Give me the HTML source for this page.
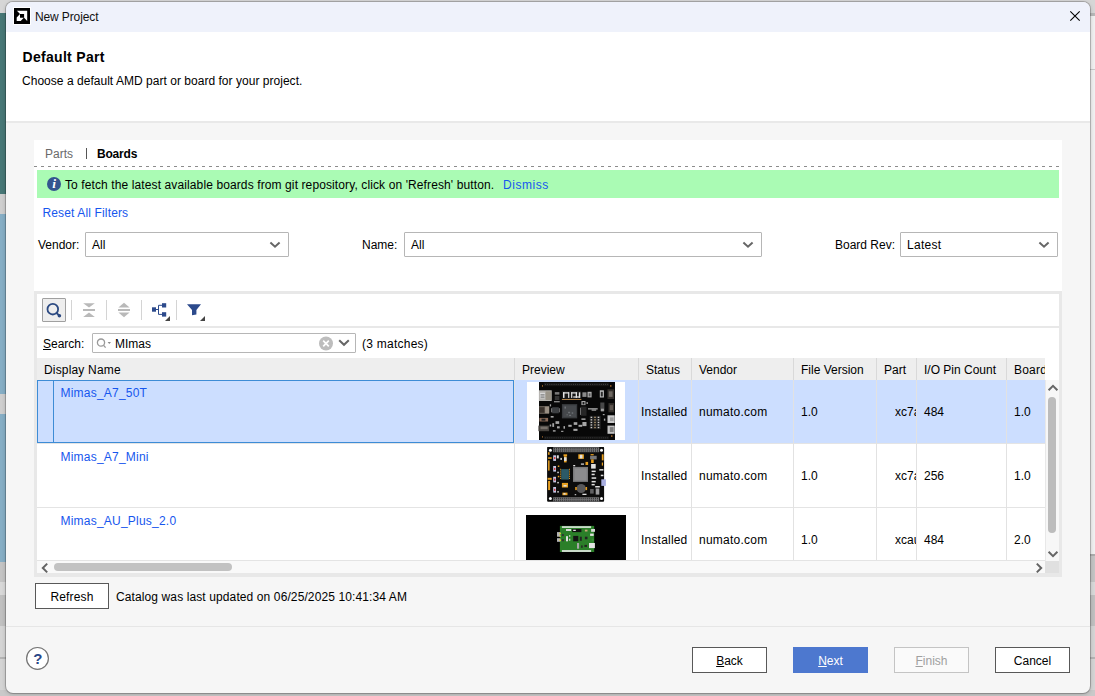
<!DOCTYPE html>
<html>
<head>
<meta charset="utf-8">
<title>New Project</title>
<style>
html,body{margin:0;padding:0;}
body{width:1095px;height:696px;overflow:hidden;position:relative;background:#d0d0d0;font-family:"Liberation Sans",sans-serif;font-size:12px;color:#000;}
.a{position:absolute;}
.t{position:absolute;white-space:nowrap;line-height:14px;font-size:12px;}
#dlg{left:6px;top:2px;width:1084px;height:691px;background:#f6f6f6;border-radius:7px;overflow:hidden;box-shadow:0 0 0 1px rgba(0,0,0,0.20),0 1px 4px 0 rgba(0,0,0,0.22);}
.combo{position:absolute;box-sizing:border-box;height:25px;border:1px solid #b6b6b6;border-radius:1px;background:#fff;top:232px;}
.combo svg{position:absolute;right:7px;top:8px;}
.btn{position:absolute;box-sizing:border-box;width:75px;height:26px;top:647px;border:1px solid #585858;background:#fff;text-align:center;line-height:26px;font-size:12px;}
.vsep{position:absolute;width:1px;top:300px;height:20px;background:#d4d4d4;}
.hd{position:absolute;top:358px;height:22px;background:#eeeeee;}
.cl{position:absolute;width:1px;background:#e2e2e2;top:358px;height:202px;}
.blue{color:#1656ee;}
u{text-decoration:underline;text-underline-offset:1px;}
</style>
</head>
<body>
<!-- background behind dialog -->
<div class="a" style="left:0;top:0;width:1095px;height:13px;background:#d6d6d6;"></div>
<div class="a" style="left:0;top:13px;width:8px;height:181px;background:#477776;"></div>
<div class="a" style="left:0;top:194px;width:8px;height:20px;background:#cecece;"></div>
<div class="a" style="left:0;top:214px;width:8px;height:180px;background:#86aec5;"></div>
<div class="a" style="left:0;top:394px;width:8px;height:20px;background:#cecece;"></div>
<div class="a" style="left:0;top:414px;width:8px;height:148px;background:#86aec5;"></div>
<div class="a" style="left:0;top:562px;width:8px;height:20px;background:#c4c4c4;"></div>
<div class="a" style="left:0;top:582px;width:8px;height:14px;background:#d8d8d8;"></div>
<div class="a" style="left:0;top:595px;width:8px;height:31px;background:#c0c0c0;"></div>
<div class="a" style="left:0;top:626px;width:8px;height:70px;background:#d4d4d4;"></div>
<div class="a" style="left:1088px;top:13px;width:7px;height:3px;background:#b8b8b8;"></div>
<div class="a" style="left:1088px;top:16px;width:7px;height:538px;background:#f0f0f0;"></div>
<div class="a" style="left:1088px;top:69px;width:7px;height:1px;background:#c8c8c8;"></div>
<div class="a" style="left:1088px;top:554px;width:7px;height:28px;background:#c4c4c4;"></div>
<div class="a" style="left:1088px;top:554px;width:7px;height:2px;background:#acacac;"></div>
<div class="a" style="left:1088px;top:582px;width:7px;height:14px;background:#d8d8d8;"></div>
<div class="a" style="left:1088px;top:595px;width:7px;height:31px;background:#c0c0c0;"></div>
<div class="a" style="left:1088px;top:626px;width:7px;height:70px;background:#d4d4d4;"></div>
<div class="a" style="left:1088px;top:657px;width:7px;height:2px;background:#b4b4b4;"></div>
<div class="a" style="left:0;top:657px;width:8px;height:2px;background:#b4b4b4;"></div>
<div class="a" style="left:0;top:690px;width:1095px;height:6px;background:#c9c9c9;"></div>

<div id="dlg" class="a">
  <div class="a" style="left:0;top:0;width:1085px;height:30px;background:#eff2fb;"></div>
  <div class="a" style="left:0;top:30px;width:1085px;height:89px;background:#fff;"></div>
  <div class="a" style="left:0;top:119px;width:1085px;height:2px;background:#e9e9e9;"></div>
  <div class="a" style="left:0;top:624px;width:1085px;height:1px;background:#e6e6e6;"></div>
</div>

<!-- title bar -->
<svg class="a" style="left:13px;top:7px" width="18" height="18" viewBox="0 0 18 18">
  <rect x="0" y="0" width="18" height="18" fill="#fff"/>
  <rect x="1" y="1" width="16" height="16" fill="#000"/>
  <polygon points="3.9,3.7 14.2,3.7 14.2,14.1 11.1,10.8 11.1,7 7,7" fill="#fff"/>
  <polygon points="7,7 7,10.8 10.8,10.8 7.7,14.1 3.7,14.1 3.7,10.4" fill="#fff"/>
</svg>
<div class="t" style="left:35px;top:10px;font-size:12px;letter-spacing:-0.12px;color:#111;">New Project</div>
<svg class="a" style="left:1068px;top:9px" width="14" height="14" viewBox="0 0 14 14"><path d="M2.3 2.3 L11.7 11.7 M11.7 2.3 L2.3 11.7" stroke="#000" stroke-width="1.1" fill="none"/></svg>

<!-- header -->
<div class="t" style="left:22.5px;top:48px;font-size:14px;font-weight:bold;line-height:18px;letter-spacing:0.3px;">Default Part</div>
<div class="t" style="left:22px;top:74px;letter-spacing:0.03px;">Choose a default AMD part or board for your project.</div>

<!-- upper white panel -->
<div class="a" style="left:34px;top:140px;width:1028px;height:151px;background:#fff;"></div>
<div class="t" style="left:45px;top:147px;color:#6a6a6a;">Parts</div>
<div class="a" style="left:86px;top:148px;width:1px;height:11px;background:#555;"></div>
<div class="t" style="left:97px;top:147px;font-weight:bold;letter-spacing:-0.2px;">Boards</div>
<div class="a" style="left:34px;top:166px;width:1028px;height:1px;background:repeating-linear-gradient(90deg,#8c8c8c 0,#8c8c8c 3px,transparent 3px,transparent 7px);"></div>
<div class="a" style="left:37px;top:170px;width:1022px;height:28px;background:#aafbb4;"></div>
<svg class="a" style="left:46px;top:176px" width="16" height="16" viewBox="0 0 16 16">
  <circle cx="8" cy="8" r="7" fill="#34558f"/>
  <text x="8.2" y="12.4" font-family="Liberation Serif, serif" font-size="13.5" font-weight="bold" font-style="italic" fill="#fff" text-anchor="middle">i</text>
</svg>
<div class="t" style="left:65px;top:178px;letter-spacing:0.11px;">To fetch the latest available boards from git repository, click on 'Refresh' button.</div>
<div class="t blue" style="left:503px;top:178px;letter-spacing:0.55px;">Dismiss</div>
<div class="t blue" style="left:42.5px;top:206px;letter-spacing:0.14px;">Reset All Filters</div>

<div class="t" style="left:38px;top:238px;">Vendor:</div>
<div class="combo" style="left:85px;width:204px;"><span class="t" style="left:6px;top:5px;">All</span><svg width="12" height="8" viewBox="0 0 12 8"><path d="M1.4 1.6 L6 5.7 L10.6 1.6" stroke="#666" stroke-width="2" fill="none"/></svg></div>
<div class="t" style="left:362px;top:238px;">Name:</div>
<div class="combo" style="left:404px;width:358px;"><span class="t" style="left:6px;top:5px;">All</span><svg width="12" height="8" viewBox="0 0 12 8"><path d="M1.4 1.6 L6 5.7 L10.6 1.6" stroke="#666" stroke-width="2" fill="none"/></svg></div>
<div class="t" style="left:835px;top:238px;">Board Rev:</div>
<div class="combo" style="left:900px;width:158px;"><span class="t" style="left:6px;top:5px;letter-spacing:0.3px;">Latest</span><svg width="12" height="8" viewBox="0 0 12 8"><path d="M1.4 1.6 L6 5.7 L10.6 1.6" stroke="#666" stroke-width="2" fill="none"/></svg></div>

<!-- lower panel -->
<div class="a" style="left:34px;top:291px;width:1028px;height:286px;background:#e8e8e8;"></div>
<div class="a" style="left:37px;top:294px;width:1022px;height:279px;background:#fff;"></div>
<div class="a" style="left:37px;top:326px;width:1022px;height:2px;background:#e8e8e8;"></div>

<!-- toolbar -->
<div class="a" style="left:42px;top:298px;width:24px;height:24px;box-sizing:border-box;border:1px solid #a0a0a0;background:#eeeeee;border-radius:1px;"></div>
<svg class="a" style="left:44px;top:300px" width="20" height="20" viewBox="0 0 20 20">
  <circle cx="8.8" cy="9.2" r="5.3" fill="none" stroke="#2c4a82" stroke-width="1.8"/>
  <path d="M12.6 13 L15 15.4" stroke="#2c4a82" stroke-width="1.8"/><circle cx="15.4" cy="15.7" r="1.8" fill="#2c4a82"/>
</svg>
<div class="vsep" style="left:71px;"></div>
<svg class="a" style="left:80px;top:300px" width="20" height="20" viewBox="0 0 20 20" fill="#b9b9b9">
  <polygon points="3.2,3.2 14.8,3.2 9,7.4"/><rect x="3" y="9" width="12" height="2"/><polygon points="3.2,17 14.8,17 9,12.6"/>
</svg>
<div class="vsep" style="left:106px;"></div>
<svg class="a" style="left:115px;top:300px" width="20" height="20" viewBox="0 0 20 20" fill="#b9b9b9">
  <polygon points="3.4,7.4 14.6,7.4 9,2.8"/><rect x="3" y="9" width="12" height="2"/><polygon points="3.4,12.6 14.6,12.6 9,17.2"/>
</svg>
<div class="vsep" style="left:141px;"></div>
<svg class="a" style="left:150px;top:300px" width="22" height="22" viewBox="0 0 22 22">
  <g fill="#2c4a8c"><rect x="2" y="7.3" width="4" height="4.4"/><rect x="12" y="3.2" width="4.2" height="4.3"/><rect x="12" y="12.2" width="4.2" height="4.4"/></g>
  <path d="M6 9.5 H8.5 M8.5 5.3 V14.4 M8.5 5.3 H12 M8.5 14.4 H12" stroke="#2c4a8c" stroke-width="1" fill="none"/>
  <polygon points="20,16 20,21 15,21" fill="#444"/>
</svg>
<div class="vsep" style="left:176px;"></div>
<svg class="a" style="left:185px;top:300px" width="22" height="22" viewBox="0 0 22 22">
  <polygon points="2,4.2 16,4.2 11.4,10 11.4,14.4 7,15.3 7,10" fill="#2c4a8c"/>
  <polygon points="20,16 20,21 15,21" fill="#444"/>
</svg>

<!-- search row -->
<div class="t" style="left:43px;top:337px;"><u>S</u>earch:</div>
<div class="a" style="left:92px;top:333px;width:264px;height:20px;box-sizing:border-box;border:1px solid #b6b6b6;border-radius:1px;background:#fff;"></div>
<svg class="a" style="left:95px;top:336px" width="18" height="14" viewBox="0 0 18 14">
  <circle cx="6" cy="6.6" r="3.6" fill="none" stroke="#9a9a9a" stroke-width="1.3"/>
  <path d="M8.6 9.4 L10.6 11.6" stroke="#9a9a9a" stroke-width="1.4"/>
  <polygon points="12.6,6 16,6 14.3,7.9" fill="#8a8a8a"/>
</svg>
<div class="t" style="left:115px;top:337px;">MImas</div>
<svg class="a" style="left:318px;top:335px" width="16" height="16" viewBox="0 0 16 16">
  <circle cx="8" cy="8.5" r="7" fill="#bdbdbd"/>
  <path d="M5.2 5.7 L10.8 11.3 M10.8 5.7 L5.2 11.3" stroke="#fff" stroke-width="1.7"/>
</svg>
<svg class="a" style="left:338px;top:339px" width="12" height="8" viewBox="0 0 12 8"><path d="M1.2 1.2 L6 5.8 L10.8 1.2" stroke="#666" stroke-width="2" fill="none"/></svg>
<div class="t" style="left:362px;top:337px;letter-spacing:0.25px;">(3 matches)</div>

<!-- table header -->
<div class="hd" style="left:37px;width:1008px;"></div>
<div class="t" style="left:44px;top:363px;letter-spacing:0.17px;">Display Name</div>
<div class="t" style="left:522px;top:363px;">Preview</div>
<div class="t" style="left:646px;top:363px;">Status</div>
<div class="t" style="left:699px;top:363px;">Vendor</div>
<div class="t" style="left:801px;top:363px;">File Version</div>
<div class="t" style="left:884px;top:363px;">Part</div>
<div class="t" style="left:924px;top:363px;">I/O Pin Count</div>
<div class="t" style="left:1014px;top:363px;width:31px;overflow:hidden;letter-spacing:0.2px;">Board</div>

<!-- rows -->
<div class="a" style="left:37px;top:380px;width:1008px;height:63px;background:#ccdeff;"></div>
<div class="a" style="left:37px;top:443px;width:1008px;height:1px;background:#e4e4e4;"></div>
<div class="a" style="left:37px;top:507px;width:1008px;height:1px;background:#e4e4e4;"></div>
<div class="a" style="left:37px;top:560px;width:1022px;height:13px;background:#f9f9f9;"></div>
<div class="a" style="left:37px;top:560px;width:1008px;height:1px;background:#e4e4e4;"></div>
<div class="cl" style="left:514px;"></div>
<div class="cl" style="left:638px;"></div>
<div class="cl" style="left:691px;"></div>
<div class="cl" style="left:793px;"></div>
<div class="cl" style="left:876px;"></div>
<div class="cl" style="left:916px;"></div>
<div class="cl" style="left:1006px;"></div>
<div class="a" style="left:514px;top:358px;width:1px;height:22px;background:#d9d9d9;"></div>
<div class="a" style="left:638px;top:358px;width:1px;height:22px;background:#d9d9d9;"></div>
<div class="a" style="left:691px;top:358px;width:1px;height:22px;background:#d9d9d9;"></div>
<div class="a" style="left:793px;top:358px;width:1px;height:22px;background:#d9d9d9;"></div>
<div class="a" style="left:876px;top:358px;width:1px;height:22px;background:#d9d9d9;"></div>
<div class="a" style="left:916px;top:358px;width:1px;height:22px;background:#d9d9d9;"></div>
<div class="a" style="left:1006px;top:358px;width:1px;height:22px;background:#d9d9d9;"></div>
<div class="a" style="left:37px;top:380px;width:477px;height:63px;box-sizing:border-box;border:1px solid #3d8cd6;"></div>
<div class="a" style="left:53px;top:380px;width:1px;height:63px;background:#3d8cd6;"></div>

<div class="t blue" style="letter-spacing:0.22px;left:60.5px;top:386px;">Mimas_A7_50T</div>
<div class="t blue" style="letter-spacing:0.22px;left:60.5px;top:450px;">Mimas_A7_Mini</div>
<div class="t blue" style="letter-spacing:0.22px;left:60.5px;top:514px;">Mimas_AU_Plus_2.0</div>

<div id="imgs">
<svg class="a" style="left:527px;top:382px" width="98" height="58" viewBox="0 0 98 58">
<rect x="0.0" y="0.0" width="98.0" height="58.0" fill="#fff"/>
<rect x="12.0" y="0.0" width="76.0" height="58.0" fill="#080808"/>
<rect x="17.0" y="0.6" width="64.9" height="3.6" fill="#161616"/>
<rect x="17.0" y="54.3" width="64.9" height="3.1" fill="#161616"/>
<rect x="18.1" y="1.9" width="0.8" height="1.0" fill="#4a4a4a"/>
<rect x="18.1" y="55.3" width="0.8" height="1.0" fill="#3a3a3a"/>
<rect x="20.2" y="1.9" width="0.8" height="1.0" fill="#4a4a4a"/>
<rect x="20.2" y="55.3" width="0.8" height="1.0" fill="#3a3a3a"/>
<rect x="22.4" y="1.9" width="0.8" height="1.0" fill="#4a4a4a"/>
<rect x="22.4" y="55.3" width="0.8" height="1.0" fill="#3a3a3a"/>
<rect x="24.5" y="1.9" width="0.8" height="1.0" fill="#4a4a4a"/>
<rect x="24.5" y="55.3" width="0.8" height="1.0" fill="#3a3a3a"/>
<rect x="26.7" y="1.9" width="0.8" height="1.0" fill="#4a4a4a"/>
<rect x="26.7" y="55.3" width="0.8" height="1.0" fill="#3a3a3a"/>
<rect x="28.8" y="1.9" width="0.8" height="1.0" fill="#4a4a4a"/>
<rect x="28.8" y="55.3" width="0.8" height="1.0" fill="#3a3a3a"/>
<rect x="30.9" y="1.9" width="0.8" height="1.0" fill="#4a4a4a"/>
<rect x="30.9" y="55.3" width="0.8" height="1.0" fill="#3a3a3a"/>
<rect x="33.1" y="1.9" width="0.8" height="1.0" fill="#4a4a4a"/>
<rect x="33.1" y="55.3" width="0.8" height="1.0" fill="#3a3a3a"/>
<rect x="35.2" y="1.9" width="0.8" height="1.0" fill="#4a4a4a"/>
<rect x="35.2" y="55.3" width="0.8" height="1.0" fill="#3a3a3a"/>
<rect x="37.4" y="1.9" width="0.8" height="1.0" fill="#4a4a4a"/>
<rect x="37.4" y="55.3" width="0.8" height="1.0" fill="#3a3a3a"/>
<rect x="39.5" y="1.9" width="0.8" height="1.0" fill="#4a4a4a"/>
<rect x="39.5" y="55.3" width="0.8" height="1.0" fill="#3a3a3a"/>
<rect x="41.7" y="1.9" width="0.8" height="1.0" fill="#4a4a4a"/>
<rect x="41.7" y="55.3" width="0.8" height="1.0" fill="#3a3a3a"/>
<rect x="43.8" y="1.9" width="0.8" height="1.0" fill="#4a4a4a"/>
<rect x="43.8" y="55.3" width="0.8" height="1.0" fill="#3a3a3a"/>
<rect x="46.0" y="1.9" width="0.8" height="1.0" fill="#4a4a4a"/>
<rect x="46.0" y="55.3" width="0.8" height="1.0" fill="#3a3a3a"/>
<rect x="48.1" y="1.9" width="0.8" height="1.0" fill="#4a4a4a"/>
<rect x="48.1" y="55.3" width="0.8" height="1.0" fill="#3a3a3a"/>
<rect x="50.3" y="1.9" width="0.8" height="1.0" fill="#4a4a4a"/>
<rect x="50.3" y="55.3" width="0.8" height="1.0" fill="#3a3a3a"/>
<rect x="52.4" y="1.9" width="0.8" height="1.0" fill="#4a4a4a"/>
<rect x="52.4" y="55.3" width="0.8" height="1.0" fill="#3a3a3a"/>
<rect x="54.6" y="1.9" width="0.8" height="1.0" fill="#4a4a4a"/>
<rect x="54.6" y="55.3" width="0.8" height="1.0" fill="#3a3a3a"/>
<rect x="56.7" y="1.9" width="0.8" height="1.0" fill="#4a4a4a"/>
<rect x="56.7" y="55.3" width="0.8" height="1.0" fill="#3a3a3a"/>
<rect x="58.9" y="1.9" width="0.8" height="1.0" fill="#4a4a4a"/>
<rect x="58.9" y="55.3" width="0.8" height="1.0" fill="#3a3a3a"/>
<rect x="61.0" y="1.9" width="0.8" height="1.0" fill="#4a4a4a"/>
<rect x="61.0" y="55.3" width="0.8" height="1.0" fill="#3a3a3a"/>
<rect x="63.2" y="1.9" width="0.8" height="1.0" fill="#4a4a4a"/>
<rect x="63.2" y="55.3" width="0.8" height="1.0" fill="#3a3a3a"/>
<rect x="65.3" y="1.9" width="0.8" height="1.0" fill="#4a4a4a"/>
<rect x="65.3" y="55.3" width="0.8" height="1.0" fill="#3a3a3a"/>
<rect x="67.5" y="1.9" width="0.8" height="1.0" fill="#4a4a4a"/>
<rect x="67.5" y="55.3" width="0.8" height="1.0" fill="#3a3a3a"/>
<rect x="69.6" y="1.9" width="0.8" height="1.0" fill="#4a4a4a"/>
<rect x="69.6" y="55.3" width="0.8" height="1.0" fill="#3a3a3a"/>
<rect x="71.8" y="1.9" width="0.8" height="1.0" fill="#4a4a4a"/>
<rect x="71.8" y="55.3" width="0.8" height="1.0" fill="#3a3a3a"/>
<rect x="73.9" y="1.9" width="0.8" height="1.0" fill="#4a4a4a"/>
<rect x="73.9" y="55.3" width="0.8" height="1.0" fill="#3a3a3a"/>
<rect x="76.1" y="1.9" width="0.8" height="1.0" fill="#4a4a4a"/>
<rect x="76.1" y="55.3" width="0.8" height="1.0" fill="#3a3a3a"/>
<rect x="78.2" y="1.9" width="0.8" height="1.0" fill="#4a4a4a"/>
<rect x="78.2" y="55.3" width="0.8" height="1.0" fill="#3a3a3a"/>
<rect x="80.3" y="1.9" width="0.8" height="1.0" fill="#4a4a4a"/>
<rect x="80.3" y="55.3" width="0.8" height="1.0" fill="#3a3a3a"/>
<rect x="11.9" y="8.3" width="12.8" height="10.7" fill="#b4b2ae"/>
<rect x="12.9" y="10.8" width="5.1" height="5.6" fill="#d8d8d8"/>
<rect x="13.5" y="12.4" width="4.1" height="1.0" fill="#6a6a6a"/>
<rect x="13.5" y="14.6" width="4.1" height="1.0" fill="#6a6a6a"/>
<rect x="18.6" y="9.3" width="5.6" height="8.7" fill="#9a9488"/>
<rect x="12.2" y="24.1" width="9.9" height="7.7" fill="#6e655c"/>
<rect x="12.2" y="25.2" width="5.3" height="5.6" fill="#3a322c"/>
<rect x="18.1" y="24.6" width="4.1" height="6.6" fill="#9a9084"/>
<rect x="12.4" y="35.9" width="8.7" height="3.6" fill="#8a6a58"/>
<rect x="14.5" y="36.7" width="3.9" height="2.0" fill="#222"/>
<rect x="11.4" y="43.6" width="10.7" height="5.6" fill="#46423e"/>
<rect x="13.5" y="44.6" width="7.2" height="2.6" fill="#77706a"/>
<rect x="34.9" y="8.8" width="19.4" height="9.2" fill="#181818"/>
<rect x="36.0" y="10.3" width="1.5" height="5.6" fill="#e4e4e4"/>
<rect x="36.0" y="10.3" width="6.1" height="1.2" fill="#e4e4e4"/>
<rect x="41.1" y="10.3" width="1.2" height="5.6" fill="#e4e4e4"/>
<rect x="44.1" y="10.3" width="1.2" height="5.6" fill="#e4e4e4"/>
<rect x="44.1" y="10.3" width="6.1" height="1.2" fill="#e4e4e4"/>
<rect x="48.7" y="10.3" width="1.3" height="5.6" fill="#e4e4e4"/>
<rect x="51.8" y="10.3" width="1.5" height="5.6" fill="#e4e4e4"/>
<rect x="46.2" y="14.4" width="6.1" height="1.2" fill="#e4e4e4"/>
<rect x="34.9" y="17.0" width="19.4" height="1.0" fill="#b08248"/>
<rect x="55.4" y="10.3" width="4.1" height="4.6" fill="#8a8a8a"/>
<rect x="60.5" y="9.8" width="4.1" height="5.6" fill="#b0b0b0"/>
<rect x="61.7" y="11.3" width="1.8" height="3.1" fill="#555"/>
<rect x="27.8" y="10.1" width="4.6" height="2.5" fill="#7a7a7a"/>
<rect x="27.8" y="13.9" width="4.6" height="4.1" fill="#343434"/>
<rect x="34.9" y="22.1" width="15.3" height="14.3" fill="#383b3e"/>
<rect x="36.2" y="23.4" width="12.9" height="11.7" fill="#45484b"/>
<rect x="37.5" y="24.6" width="1.5" height="2.0" fill="#6c7074"/>
<rect x="41.1" y="29.8" width="2.0" height="1.5" fill="#6c7074"/>
<rect x="44.7" y="30.3" width="1.5" height="1.5" fill="#6c7074"/>
<rect x="42.1" y="32.8" width="2.0" height="1.2" fill="#6c7074"/>
<rect x="39.5" y="32.3" width="1.3" height="1.0" fill="#6c7074"/>
<rect x="25.2" y="25.2" width="6.6" height="6.1" fill="#3c3f42"/>
<rect x="24.2" y="26.2" width="1.0" height="4.1" fill="#8a8a8a"/>
<rect x="31.9" y="26.2" width="0.8" height="4.1" fill="#8a8a8a"/>
<rect x="53.9" y="24.6" width="5.6" height="9.2" fill="#262626"/>
<rect x="53.1" y="25.7" width="0.8" height="7.2" fill="#8a8a8a"/>
<rect x="54.4" y="19.0" width="4.1" height="4.1" fill="#a4a4a4"/>
<rect x="55.6" y="20.0" width="1.8" height="2.4" fill="#1c1c1c"/>
<rect x="80.5" y="7.3" width="6.6" height="9.7" fill="#34302c"/>
<rect x="81.8" y="9.3" width="3.8" height="5.6" fill="#6e6862"/>
<rect x="81.5" y="21.1" width="5.6" height="9.2" fill="#34302c"/>
<rect x="82.8" y="23.1" width="3.3" height="5.1" fill="#5e5650"/>
<rect x="80.5" y="33.3" width="7.2" height="7.7" fill="#cacaca"/>
<rect x="83.0" y="35.4" width="3.6" height="3.6" fill="#9c9c9c"/>
<rect x="80.5" y="43.6" width="7.2" height="8.2" fill="#c2c2c2"/>
<rect x="82.8" y="45.1" width="3.8" height="4.9" fill="#7c7c7c"/>
<rect x="72.8" y="8.3" width="4.1" height="7.2" fill="#bcbcbc"/>
<rect x="73.8" y="9.8" width="2.0" height="4.6" fill="#2c2c2c"/>
<rect x="73.3" y="20.5" width="4.1" height="8.7" fill="#484848"/>
<rect x="74.0" y="26.7" width="2.9" height="2.6" fill="#a0a0a0"/>
<rect x="62.6" y="33.8" width="11.3" height="13.3" fill="#202020"/>
<rect x="63.6" y="34.7" width="1.6" height="1.3" fill="#c8c8c8"/>
<rect x="67.2" y="34.7" width="1.6" height="1.3" fill="#a89068"/>
<rect x="70.7" y="34.7" width="1.6" height="1.3" fill="#c8c8c8"/>
<rect x="63.6" y="37.2" width="1.6" height="1.3" fill="#c8c8c8"/>
<rect x="67.2" y="37.2" width="1.6" height="1.3" fill="#a89068"/>
<rect x="70.7" y="37.2" width="1.6" height="1.3" fill="#c8c8c8"/>
<rect x="63.6" y="39.8" width="1.6" height="1.3" fill="#c8c8c8"/>
<rect x="67.2" y="39.8" width="1.6" height="1.3" fill="#a89068"/>
<rect x="70.7" y="39.8" width="1.6" height="1.3" fill="#c8c8c8"/>
<rect x="63.6" y="42.3" width="1.6" height="1.3" fill="#c8c8c8"/>
<rect x="67.2" y="42.3" width="1.6" height="1.3" fill="#a89068"/>
<rect x="70.7" y="42.3" width="1.6" height="1.3" fill="#c8c8c8"/>
<rect x="63.6" y="44.9" width="1.6" height="1.3" fill="#c8c8c8"/>
<rect x="67.2" y="44.9" width="1.6" height="1.3" fill="#a89068"/>
<rect x="70.7" y="44.9" width="1.6" height="1.3" fill="#c8c8c8"/>
<rect x="61.0" y="26.2" width="9.7" height="1.3" fill="#a6a6a6"/>
<rect x="64.6" y="27.5" width="4.6" height="1.2" fill="#a6a6a6"/>
<rect x="46.7" y="40.2" width="3.6" height="2.7" fill="#a6a6a6"/>
<rect x="41.3" y="42.8" width="3.4" height="2.0" fill="#a6a6a6"/>
<rect x="51.5" y="42.8" width="3.7" height="2.0" fill="#a6a6a6"/>
<rect x="46.4" y="46.8" width="4.1" height="2.1" fill="#a6a6a6"/>
<rect x="23.7" y="34.0" width="2.9" height="1.6" fill="#a6a6a6"/>
<rect x="28.5" y="39.2" width="3.7" height="2.7" fill="#a6a6a6"/>
<rect x="25.3" y="41.2" width="1.8" height="3.7" fill="#a6a6a6"/>
<rect x="30.0" y="44.3" width="2.7" height="2.1" fill="#a6a6a6"/>
<rect x="25.9" y="48.2" width="2.7" height="1.4" fill="#a6a6a6"/>
<rect x="34.1" y="48.8" width="2.3" height="1.1" fill="#a6a6a6"/>
<rect x="76.9" y="36.6" width="1.4" height="2.1" fill="#a6a6a6"/>
<rect x="75.8" y="32.0" width="1.8" height="1.2" fill="#a6a6a6"/>
<rect x="59.5" y="20.2" width="1.4" height="1.7" fill="#a6a6a6"/>
<rect x="27.0" y="19.2" width="5.7" height="1.1" fill="#a6a6a6"/>
<rect x="22.8" y="22.3" width="1.3" height="2.1" fill="#a6a6a6"/>
<rect x="54.4" y="36.4" width="4.1" height="1.5" fill="#a6a6a6"/>
<rect x="55.4" y="40.0" width="4.1" height="4.1" fill="#a6a6a6"/>
<rect x="36.5" y="44.1" width="1.5" height="2.6" fill="#a6a6a6"/>
<rect x="22.7" y="42.5" width="1.5" height="2.0" fill="#a6a6a6"/>
<rect x="15.0" y="3.2" width="1.0" height="1.5" fill="#a86c2c"/>
<rect x="83.0" y="3.2" width="1.5" height="1.5" fill="#a86c2c"/>
<rect x="15.0" y="54.3" width="1.0" height="1.2" fill="#a86c2c"/>
<rect x="84.0" y="53.3" width="1.5" height="1.5" fill="#a86c2c"/>
</svg>
<svg class="a" style="left:547px;top:447px" width="60" height="55" viewBox="0 0 60 55">
<rect x="0.1" y="-0.1" width="57.0" height="54.9" fill="#0c0c0c" rx="1"/>
<rect x="6.2" y="0.3" width="46.0" height="4.9" fill="#747476"/>
<rect x="6.2" y="50.2" width="46.0" height="4.4" fill="#747476"/>
<rect x="7.1" y="0.9" width="0.9" height="1.6" fill="#303030"/>
<rect x="7.1" y="3.2" width="0.9" height="1.6" fill="#303030"/>
<rect x="7.1" y="50.7" width="0.9" height="1.4" fill="#303030"/>
<rect x="7.1" y="52.8" width="0.9" height="1.4" fill="#303030"/>
<rect x="9.1" y="0.9" width="0.9" height="1.6" fill="#303030"/>
<rect x="9.1" y="3.2" width="0.9" height="1.6" fill="#303030"/>
<rect x="9.1" y="50.7" width="0.9" height="1.4" fill="#303030"/>
<rect x="9.1" y="52.8" width="0.9" height="1.4" fill="#303030"/>
<rect x="11.2" y="0.9" width="0.9" height="1.6" fill="#303030"/>
<rect x="11.2" y="3.2" width="0.9" height="1.6" fill="#303030"/>
<rect x="11.2" y="50.7" width="0.9" height="1.4" fill="#303030"/>
<rect x="11.2" y="52.8" width="0.9" height="1.4" fill="#303030"/>
<rect x="13.2" y="0.9" width="0.9" height="1.6" fill="#303030"/>
<rect x="13.2" y="3.2" width="0.9" height="1.6" fill="#303030"/>
<rect x="13.2" y="50.7" width="0.9" height="1.4" fill="#303030"/>
<rect x="13.2" y="52.8" width="0.9" height="1.4" fill="#303030"/>
<rect x="15.2" y="0.9" width="0.9" height="1.6" fill="#303030"/>
<rect x="15.2" y="3.2" width="0.9" height="1.6" fill="#303030"/>
<rect x="15.2" y="50.7" width="0.9" height="1.4" fill="#303030"/>
<rect x="15.2" y="52.8" width="0.9" height="1.4" fill="#303030"/>
<rect x="17.3" y="0.9" width="0.9" height="1.6" fill="#303030"/>
<rect x="17.3" y="3.2" width="0.9" height="1.6" fill="#303030"/>
<rect x="17.3" y="50.7" width="0.9" height="1.4" fill="#303030"/>
<rect x="17.3" y="52.8" width="0.9" height="1.4" fill="#303030"/>
<rect x="19.3" y="0.9" width="0.9" height="1.6" fill="#303030"/>
<rect x="19.3" y="3.2" width="0.9" height="1.6" fill="#303030"/>
<rect x="19.3" y="50.7" width="0.9" height="1.4" fill="#303030"/>
<rect x="19.3" y="52.8" width="0.9" height="1.4" fill="#303030"/>
<rect x="21.4" y="0.9" width="0.9" height="1.6" fill="#303030"/>
<rect x="21.4" y="3.2" width="0.9" height="1.6" fill="#303030"/>
<rect x="21.4" y="50.7" width="0.9" height="1.4" fill="#303030"/>
<rect x="21.4" y="52.8" width="0.9" height="1.4" fill="#303030"/>
<rect x="23.4" y="0.9" width="0.9" height="1.6" fill="#303030"/>
<rect x="23.4" y="3.2" width="0.9" height="1.6" fill="#303030"/>
<rect x="23.4" y="50.7" width="0.9" height="1.4" fill="#303030"/>
<rect x="23.4" y="52.8" width="0.9" height="1.4" fill="#303030"/>
<rect x="25.5" y="0.9" width="0.9" height="1.6" fill="#303030"/>
<rect x="25.5" y="3.2" width="0.9" height="1.6" fill="#303030"/>
<rect x="25.5" y="50.7" width="0.9" height="1.4" fill="#303030"/>
<rect x="25.5" y="52.8" width="0.9" height="1.4" fill="#303030"/>
<rect x="27.5" y="0.9" width="0.9" height="1.6" fill="#303030"/>
<rect x="27.5" y="3.2" width="0.9" height="1.6" fill="#303030"/>
<rect x="27.5" y="50.7" width="0.9" height="1.4" fill="#303030"/>
<rect x="27.5" y="52.8" width="0.9" height="1.4" fill="#303030"/>
<rect x="29.6" y="0.9" width="0.9" height="1.6" fill="#303030"/>
<rect x="29.6" y="3.2" width="0.9" height="1.6" fill="#303030"/>
<rect x="29.6" y="50.7" width="0.9" height="1.4" fill="#303030"/>
<rect x="29.6" y="52.8" width="0.9" height="1.4" fill="#303030"/>
<rect x="31.6" y="0.9" width="0.9" height="1.6" fill="#303030"/>
<rect x="31.6" y="3.2" width="0.9" height="1.6" fill="#303030"/>
<rect x="31.6" y="50.7" width="0.9" height="1.4" fill="#303030"/>
<rect x="31.6" y="52.8" width="0.9" height="1.4" fill="#303030"/>
<rect x="33.7" y="0.9" width="0.9" height="1.6" fill="#303030"/>
<rect x="33.7" y="3.2" width="0.9" height="1.6" fill="#303030"/>
<rect x="33.7" y="50.7" width="0.9" height="1.4" fill="#303030"/>
<rect x="33.7" y="52.8" width="0.9" height="1.4" fill="#303030"/>
<rect x="35.7" y="0.9" width="0.9" height="1.6" fill="#303030"/>
<rect x="35.7" y="3.2" width="0.9" height="1.6" fill="#303030"/>
<rect x="35.7" y="50.7" width="0.9" height="1.4" fill="#303030"/>
<rect x="35.7" y="52.8" width="0.9" height="1.4" fill="#303030"/>
<rect x="37.7" y="0.9" width="0.9" height="1.6" fill="#303030"/>
<rect x="37.7" y="3.2" width="0.9" height="1.6" fill="#303030"/>
<rect x="37.7" y="50.7" width="0.9" height="1.4" fill="#303030"/>
<rect x="37.7" y="52.8" width="0.9" height="1.4" fill="#303030"/>
<rect x="39.8" y="0.9" width="0.9" height="1.6" fill="#303030"/>
<rect x="39.8" y="3.2" width="0.9" height="1.6" fill="#303030"/>
<rect x="39.8" y="50.7" width="0.9" height="1.4" fill="#303030"/>
<rect x="39.8" y="52.8" width="0.9" height="1.4" fill="#303030"/>
<rect x="41.8" y="0.9" width="0.9" height="1.6" fill="#303030"/>
<rect x="41.8" y="3.2" width="0.9" height="1.6" fill="#303030"/>
<rect x="41.8" y="50.7" width="0.9" height="1.4" fill="#303030"/>
<rect x="41.8" y="52.8" width="0.9" height="1.4" fill="#303030"/>
<rect x="43.9" y="0.9" width="0.9" height="1.6" fill="#303030"/>
<rect x="43.9" y="3.2" width="0.9" height="1.6" fill="#303030"/>
<rect x="43.9" y="50.7" width="0.9" height="1.4" fill="#303030"/>
<rect x="43.9" y="52.8" width="0.9" height="1.4" fill="#303030"/>
<rect x="45.9" y="0.9" width="0.9" height="1.6" fill="#303030"/>
<rect x="45.9" y="3.2" width="0.9" height="1.6" fill="#303030"/>
<rect x="45.9" y="50.7" width="0.9" height="1.4" fill="#303030"/>
<rect x="45.9" y="52.8" width="0.9" height="1.4" fill="#303030"/>
<rect x="48.0" y="0.9" width="0.9" height="1.6" fill="#303030"/>
<rect x="48.0" y="3.2" width="0.9" height="1.6" fill="#303030"/>
<rect x="48.0" y="50.7" width="0.9" height="1.4" fill="#303030"/>
<rect x="48.0" y="52.8" width="0.9" height="1.4" fill="#303030"/>
<rect x="50.0" y="0.9" width="0.9" height="1.6" fill="#303030"/>
<rect x="50.0" y="3.2" width="0.9" height="1.6" fill="#303030"/>
<rect x="50.0" y="50.7" width="0.9" height="1.4" fill="#303030"/>
<rect x="50.0" y="52.8" width="0.9" height="1.4" fill="#303030"/>
<circle cx="3.4" cy="3.2" r="1.5" fill="#fff"/>
<circle cx="54.5" cy="3.2" r="1.5" fill="#fff"/>
<circle cx="3.4" cy="51.5" r="1.5" fill="#fff"/>
<circle cx="54.5" cy="51.5" r="1.5" fill="#fff"/>
<rect x="26.0" y="19.9" width="15.0" height="15.0" fill="#7a7a7c"/>
<rect x="27.4" y="21.3" width="12.3" height="12.2" fill="#8c8c8e"/>
<rect x="14.2" y="22.1" width="7.7" height="10.5" fill="#2c5a68"/>
<rect x="13.1" y="21.8" width="1.0" height="1.0" fill="#e09a20"/>
<rect x="22.0" y="21.8" width="1.0" height="1.0" fill="#e09a20"/>
<rect x="13.1" y="23.6" width="1.0" height="1.0" fill="#e09a20"/>
<rect x="22.0" y="23.6" width="1.0" height="1.0" fill="#e09a20"/>
<rect x="13.1" y="25.5" width="1.0" height="1.0" fill="#e09a20"/>
<rect x="22.0" y="25.5" width="1.0" height="1.0" fill="#e09a20"/>
<rect x="13.1" y="27.3" width="1.0" height="1.0" fill="#e09a20"/>
<rect x="22.0" y="27.3" width="1.0" height="1.0" fill="#e09a20"/>
<rect x="13.1" y="29.2" width="1.0" height="1.0" fill="#e09a20"/>
<rect x="22.0" y="29.2" width="1.0" height="1.0" fill="#e09a20"/>
<rect x="13.1" y="31.0" width="1.0" height="1.0" fill="#e09a20"/>
<rect x="22.0" y="31.0" width="1.0" height="1.0" fill="#e09a20"/>
<circle cx="34.2" cy="41.5" r="4.6" fill="#58585a"/>
<rect x="28.2" y="40.0" width="1.6" height="3.1" fill="#e09a20"/>
<rect x="38.5" y="40.0" width="1.6" height="3.1" fill="#e09a20"/>
<rect x="6.2" y="8.3" width="2.8" height="5.6" fill="#c4c8e8"/>
<rect x="7.0" y="10.1" width="1.4" height="2.0" fill="#d03030"/>
<rect x="6.2" y="19.0" width="2.8" height="5.6" fill="#c4c8e8"/>
<rect x="7.0" y="20.9" width="1.4" height="2.0" fill="#d03030"/>
<rect x="6.2" y="29.8" width="2.8" height="5.6" fill="#c4c8e8"/>
<rect x="7.0" y="31.6" width="1.4" height="2.0" fill="#d03030"/>
<rect x="6.2" y="40.0" width="2.8" height="5.6" fill="#c4c8e8"/>
<rect x="7.0" y="41.8" width="1.4" height="2.0" fill="#d03030"/>
<rect x="54.3" y="32.3" width="4.6" height="6.6" fill="#a8aee0"/>
<rect x="43.1" y="8.8" width="6.6" height="3.6" fill="#77777a"/>
<rect x="43.1" y="42.0" width="3.6" height="4.6" fill="#606062"/>
<rect x="48.7" y="41.5" width="3.6" height="6.1" fill="#9a9a9c"/>
<rect x="14.9" y="35.9" width="6.1" height="4.6" fill="#e8a020"/>
<rect x="16.5" y="7.3" width="3.6" height="2.0" fill="#e8a020"/>
<rect x="17.0" y="9.3" width="2.6" height="6.1" fill="#e8a020"/>
<rect x="31.3" y="7.3" width="5.6" height="4.6" fill="#e8a020"/>
<rect x="44.1" y="12.4" width="2.6" height="3.6" fill="#e8a020"/>
<rect x="43.6" y="7.1" width="3.1" height="1.2" fill="#e8a020"/>
<rect x="1.1" y="10.3" width="3.6" height="1.5" fill="#e8a020"/>
<rect x="1.1" y="13.4" width="1.5" height="10.2" fill="#e8a020"/>
<rect x="0.6" y="30.8" width="4.1" height="2.0" fill="#e8a020"/>
<rect x="1.1" y="33.9" width="2.0" height="9.2" fill="#e8a020"/>
<rect x="15.4" y="45.6" width="5.1" height="2.6" fill="#e8a020"/>
<rect x="54.8" y="7.3" width="1.8" height="6.1" fill="#e8a020"/>
<rect x="54.8" y="15.5" width="1.2" height="3.1" fill="#e8a020"/>
<rect x="38.5" y="14.9" width="2.6" height="3.1" fill="#e8a020"/>
<rect x="1.1" y="5.2" width="1.5" height="2.6" fill="#e8a020"/>
<rect x="10.8" y="18.5" width="1.5" height="1.5" fill="#e8a020"/>
<rect x="10.8" y="28.8" width="1.5" height="1.5" fill="#e8a020"/>
<rect x="32.8" y="7.8" width="2.6" height="3.6" fill="#e0e0e0"/>
<rect x="17.0" y="10.3" width="2.6" height="3.6" fill="#e0e0e0"/>
<rect x="33.9" y="16.5" width="3.1" height="1.2" fill="#e0e0e0"/>
<rect x="44.1" y="17.0" width="4.6" height="4.6" fill="#e0e0e0"/>
<rect x="44.6" y="23.6" width="4.1" height="1.5" fill="#e0e0e0"/>
<rect x="44.6" y="26.7" width="3.1" height="1.5" fill="#e0e0e0"/>
<rect x="44.6" y="30.3" width="4.6" height="1.5" fill="#e0e0e0"/>
<rect x="44.6" y="33.9" width="4.1" height="1.5" fill="#e0e0e0"/>
<rect x="44.6" y="36.9" width="3.1" height="1.5" fill="#e0e0e0"/>
<rect x="48.2" y="39.0" width="4.6" height="1.5" fill="#e0e0e0"/>
<rect x="52.3" y="22.1" width="4.1" height="1.5" fill="#e0e0e0"/>
<rect x="53.8" y="27.7" width="2.6" height="1.5" fill="#e0e0e0"/>
<rect x="26.2" y="18.0" width="2.0" height="1.3" fill="#e0e0e0"/>
<rect x="16.5" y="38.0" width="3.1" height="1.5" fill="#e0e0e0"/>
<rect x="16.5" y="46.1" width="2.0" height="1.5" fill="#e0e0e0"/>
<rect x="27.7" y="47.2" width="1.5" height="1.0" fill="#e0e0e0"/>
<rect x="35.4" y="46.7" width="4.1" height="1.3" fill="#e0e0e0"/>
<rect x="9.8" y="8.3" width="2.0" height="3.1" fill="#e0e0e0"/>
<rect x="13.4" y="10.9" width="1.5" height="2.0" fill="#e0e0e0"/>
<rect x="10.3" y="24.7" width="1.5" height="1.5" fill="#e0e0e0"/>
<rect x="10.3" y="34.9" width="1.5" height="1.5" fill="#e0e0e0"/>
<rect x="10.3" y="44.1" width="1.5" height="1.5" fill="#e0e0e0"/>
</svg>
<svg class="a" style="left:526px;top:515px" width="100" height="45" viewBox="0 0 100 45">
<rect x="0.0" y="0.0" width="100.0" height="45.0" fill="#000"/>
<rect x="33.9" y="10.9" width="34.3" height="26.1" fill="#2b7f29"/>
<rect x="35.9" y="11.3" width="29.2" height="1.5" fill="#f0f0f0"/>
<rect x="35.9" y="35.2" width="29.2" height="1.6" fill="#f0f0f0"/>
<rect x="47.2" y="20.9" width="5.1" height="5.4" fill="#141414"/>
<rect x="46.2" y="14.0" width="9.2" height="3.1" fill="#101010"/>
<rect x="47.2" y="14.7" width="2.6" height="1.3" fill="#e0e0e0"/>
<rect x="31.0" y="17.1" width="3.4" height="4.6" fill="#b4b4b4"/>
<rect x="31.0" y="23.2" width="3.4" height="3.6" fill="#b4b4b4"/>
<rect x="33.4" y="17.8" width="1.5" height="1.3" fill="#e8d820"/>
<rect x="33.4" y="20.7" width="1.5" height="1.0" fill="#e8d820"/>
<rect x="33.4" y="24.5" width="1.5" height="1.4" fill="#e8d820"/>
<rect x="65.1" y="14.0" width="3.9" height="2.8" fill="#d8d8d8"/>
<rect x="63.0" y="28.0" width="5.9" height="5.1" fill="#e4e4e4"/>
<rect x="51.0" y="28.0" width="2.1" height="5.7" fill="#a8a8a8"/>
<rect x="64.1" y="18.6" width="3.6" height="2.3" fill="#e0e0e0"/>
<rect x="40.0" y="14.0" width="5.1" height="2.0" fill="#d8d8d8"/>
<rect x="40.0" y="21.2" width="2.0" height="5.1" fill="#e0e0e0"/>
<rect x="43.1" y="20.2" width="1.2" height="1.5" fill="#e0e0e0"/>
<rect x="43.1" y="23.7" width="1.2" height="2.0" fill="#e0e0e0"/>
<rect x="53.8" y="21.7" width="2.0" height="4.1" fill="#222"/>
<rect x="58.9" y="21.7" width="2.6" height="2.6" fill="#222"/>
<rect x="58.4" y="29.9" width="2.6" height="2.0" fill="#222"/>
<rect x="55.2" y="30.4" width="1.4" height="2.4" fill="#222"/>
<rect x="35.9" y="19.1" width="2.0" height="2.0" fill="#333"/>
<rect x="35.9" y="24.2" width="2.0" height="2.0" fill="#333"/>
<rect x="58.9" y="14.7" width="2.6" height="1.8" fill="#c8a878"/>
<rect x="65.6" y="23.7" width="2.3" height="2.6" fill="#3a8a38"/>
</svg>
</div>

<div class="t" style="letter-spacing:0.2px;left:641px;top:405px;">Installed</div>
<div class="t" style="letter-spacing:0.2px;left:641px;top:469px;">Installed</div>
<div class="t" style="letter-spacing:0.2px;left:641px;top:533px;">Installed</div>
<div class="t" style="letter-spacing:0.25px;left:699px;top:405px;">numato.com</div>
<div class="t" style="letter-spacing:0.25px;left:699px;top:469px;">numato.com</div>
<div class="t" style="letter-spacing:0.25px;left:699px;top:533px;">numato.com</div>
<div class="t" style="left:801px;top:405px;">1.0</div>
<div class="t" style="left:801px;top:469px;">1.0</div>
<div class="t" style="left:801px;top:533px;">1.0</div>
<div class="t" style="left:895px;top:405px;width:21px;overflow:hidden;">xc7a50t</div>
<div class="t" style="left:895px;top:469px;width:21px;overflow:hidden;">xc7a35t</div>
<div class="t" style="left:895px;top:533px;width:21px;overflow:hidden;">xcau25p</div>
<div class="t" style="left:924px;top:405px;">484</div>
<div class="t" style="left:924px;top:469px;">256</div>
<div class="t" style="left:924px;top:533px;">484</div>
<div class="t" style="left:1014px;top:405px;">1.0</div>
<div class="t" style="left:1014px;top:469px;">1.0</div>
<div class="t" style="left:1014px;top:533px;">2.0</div>

<!-- scrollbars -->
<div class="a" style="left:1046px;top:380px;width:13px;height:181px;background:#f7f7f7;"></div>
<svg class="a" style="left:1047px;top:383px" width="12" height="10" viewBox="0 0 12 10"><path d="M1.6 7.2 L6 2.8 L10.4 7.2" stroke="#666" stroke-width="2" fill="none"/></svg>
<div class="a" style="left:1048px;top:397px;width:8px;height:136px;border-radius:4px;background:#bcbcbc;"></div>
<svg class="a" style="left:1047px;top:549px" width="12" height="10" viewBox="0 0 12 10"><path d="M1.6 2.8 L6 7.2 L10.4 2.8" stroke="#666" stroke-width="2" fill="none"/></svg>
<svg class="a" style="left:40px;top:562px" width="10" height="12" viewBox="0 0 10 12"><path d="M7.2 1.6 L2.8 6 L7.2 10.4" stroke="#636363" stroke-width="2" fill="none"/></svg>
<div class="a" style="left:54px;top:563px;width:178px;height:8px;border-radius:4px;background:#c2c2c2;"></div>
<svg class="a" style="left:1034px;top:562px" width="10" height="12" viewBox="0 0 10 12"><path d="M2.8 1.6 L7.2 6 L2.8 10.4" stroke="#636363" stroke-width="2" fill="none"/></svg>
<div class="a" style="left:1045px;top:561px;width:14px;height:12px;background:#e0e0e0;"></div>
<div class="a" style="left:1045px;top:380px;width:1px;height:181px;background:#e8e8e8;"></div>

<!-- refresh -->
<div class="btn" style="left:35px;top:583px;width:74px;letter-spacing:0.15px;">Refresh</div>
<div class="t" style="left:116px;top:590px;letter-spacing:0.11px;">Catalog was last updated on 06/25/2025 10:41:34 AM</div>

<!-- bottom -->
<svg class="a" style="left:24px;top:645px" width="28" height="28" viewBox="0 0 28 28">
  <circle cx="13.5" cy="13.4" r="10.9" fill="#fff" stroke="#747474" stroke-width="1.2"/>
  <text x="13.9" y="19" font-family="Liberation Sans, sans-serif" font-size="15" font-weight="bold" fill="#2a4788" text-anchor="middle">?</text>
</svg>
<div class="btn" style="left:692px;"><u>B</u>ack</div>
<div class="btn" style="left:793px;background:#4d78cf;border-color:#4d78cf;color:#fff;"><u>N</u>ext</div>
<div class="btn" style="left:894px;border-color:#c4c4c4;color:#a0a0a0;background:#fafafa;"><u>F</u>inish</div>
<div class="btn" style="left:995px;">Cancel</div>
</body>
</html>
